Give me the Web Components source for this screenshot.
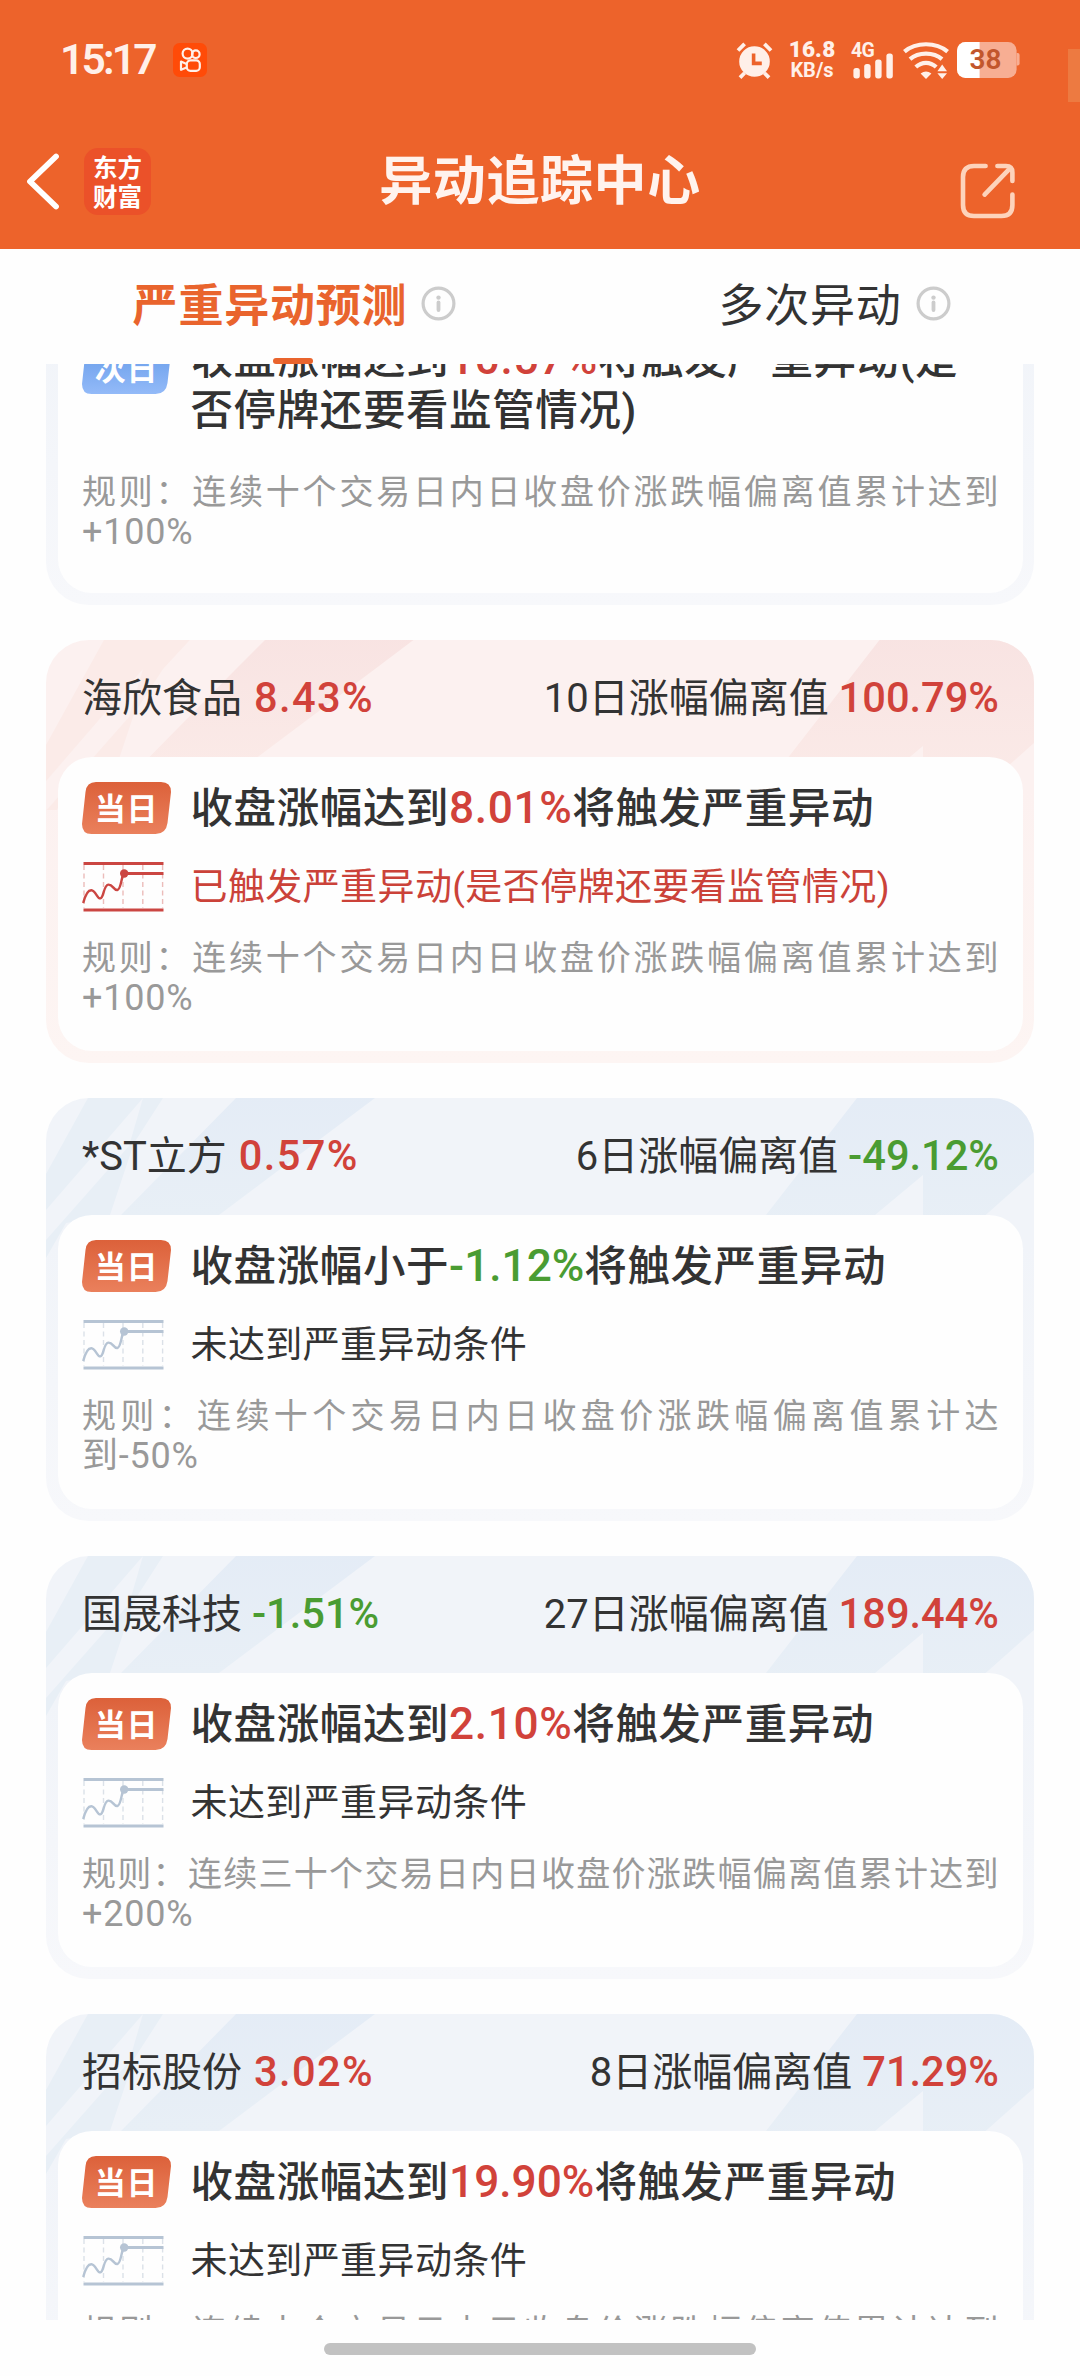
<!DOCTYPE html>
<html lang="zh-CN">
<head>
<meta charset="utf-8">
<title>异动追踪中心</title>
<style>
  body {
    margin: 0;
    width: 1080px;
    height: 2376px;
    overflow: hidden;
    background: #fefefe;
    color: #333;
    font-family: Roboto, "Noto Sans CJK SC", sans-serif;
  }
</style>
</head>
<body>
<app-page>
  <status-bar slot="top" time="15:17" battery="38"></status-bar>
  <nav-header slot="top">异动追踪中心</nav-header>
  <tab-bar slot="top">
    <tab-item active>严重异动预测</tab-item>
    <tab-item>多次异动</tab-item>
  </tab-bar>

  <stock-card long>
    <day-badge slot="badge" next>次日</day-badge>
    <span slot="title">收盘涨幅达到<rate-num>10.57%</rate-num>将触发严重异动(是<br>否停牌还要看监管情况)</span>
    <span slot="rule">规则：连续十个交易日内日收盘价涨跌幅偏离值累计达到</span>
    <span slot="rule-end">+100%</span>
  </stock-card>

  <stock-card hit>
    <span slot="name">海欣食品 <rate-num wide>8.43%</rate-num></span>
    <span slot="total">10日涨幅偏离值 <rate-num>100.79%</rate-num></span>
    <day-badge slot="badge">当日</day-badge>
    <span slot="title">收盘涨幅达到<rate-num>8.01%</rate-num>将触发严重异动</span>
    <span slot="state">已触发严重异动(是否停牌还要看监管情况)</span>
    <span slot="rule">规则：连续十个交易日内日收盘价涨跌幅偏离值累计达到</span>
    <span slot="rule-end">+100%</span>
  </stock-card>

  <stock-card>
    <span slot="name">*ST立方 <rate-num wide>0.57%</rate-num></span>
    <span slot="total">6日涨幅偏离值 <rate-num down>-49.12%</rate-num></span>
    <day-badge slot="badge">当日</day-badge>
    <span slot="title">收盘涨幅小于<rate-num down tight>-1.12%</rate-num>将触发严重异动</span>
    <span slot="state">未达到严重异动条件</span>
    <span slot="rule">规则：连续十个交易日内日收盘价涨跌幅偏离值累计达</span>
    <span slot="rule-end">到-50%</span>
  </stock-card>

  <stock-card>
    <span slot="name">国晟科技 <rate-num down>-1.51%</rate-num></span>
    <span slot="total">27日涨幅偏离值 <rate-num>189.44%</rate-num></span>
    <day-badge slot="badge">当日</day-badge>
    <span slot="title">收盘涨幅达到<rate-num>2.10%</rate-num>将触发严重异动</span>
    <span slot="state">未达到严重异动条件</span>
    <span slot="rule">规则：连续三十个交易日内日收盘价涨跌幅偏离值累计达到</span>
    <span slot="rule-end">+200%</span>
  </stock-card>

  <stock-card>
    <span slot="name">招标股份 <rate-num wide>3.02%</rate-num></span>
    <span slot="total">8日涨幅偏离值 <rate-num>71.29%</rate-num></span>
    <day-badge slot="badge">当日</day-badge>
    <span slot="title">收盘涨幅达到<rate-num tight>19.90%</rate-num>将触发严重异动</span>
    <span slot="state">未达到严重异动条件</span>
    <span slot="rule">规则：连续十个交易日内日收盘价涨跌幅偏离值累计达到</span>
    <span slot="rule-end">+100%</span>
  </stock-card>
</app-page>

<script>
// small helper: every element renders its shadow root from a string
class BaseElement extends HTMLElement {
  constructor() {
    super();
    this.attachShadow({ mode: 'open' });
  }
  connectedCallback() {
    this.shadowRoot.innerHTML = this.render();
  }
}

class AppPage extends BaseElement {
  render() {
    return `
      <style>
        :host { display: flex; flex-direction: column; height: 2376px; position: relative; }
        main { height: 1956px; overflow: hidden; flex: none; }
        .list { display: flex; flex-direction: column; gap: 35px; padding: 0 46px; margin-top: -189px; }
        footer { flex: 1; display: flex; justify-content: center; align-items: center; padding-top: 2px; }
        .home { width: 432px; height: 12px; border-radius: 6px; background: #c2c2c2; }
        .handle { position: absolute; right: 0; top: 49px; width: 12px; height: 53px; background: #ed7a41; }
      </style>
      <slot name="top"></slot>
      <main><div class="list"><slot></slot></div></main>
      <footer><div class="home"></div></footer>
      <div class="handle"></div>
    `;
  }
}

class StatusBar extends BaseElement {
  render() {
    return `
      <style>
        :host {
          display: flex; align-items: center; justify-content: space-between;
          box-sizing: border-box; height: 120px; padding: 0 60px 0 60px;
          background: #ed632b; color: #fff0e9;
        }
        div { display: flex; align-items: center; }
        .time { font-size: 42.5px; font-weight: 600; letter-spacing: -2.8px; line-height: 50px; width: 112.5px; }
        .speed { flex-direction: column; align-items: center; width: 46px; margin: 0 16px 2px 16px; font-weight: 700; }
        .speed b { font-size: 22.5px; line-height: 21px; letter-spacing: .2px; }
        .speed span { font-size: 20px; line-height: 20px; }
        .net { display: grid; width: 44px; height: 38px; }
        .net > * { grid-area: 1 / 1; }
        .net b { font-size: 19.5px; line-height: 19px; align-self: start; letter-spacing: -.6px; }
        .cell { display: grid; place-items: center start; }
        .cell > * { grid-area: 1 / 1; }
        .cell b { font-size: 28px; line-height: 34px; font-weight: 600; color: #c2562c; padding-left: 12.5px; }
        svg { display: block; flex: none; }
      </style>
      <div>
        <span class="time">${this.getAttribute('time')}</span>
        <svg width="34" height="34" viewBox="0 0 34 34">
          <rect width="34" height="34" rx="6.5" fill="#ff4b08"/>
          <g fill="none" stroke="#fff0e9" stroke-width="2.2">
            <circle cx="14.6" cy="10.6" r="5"/><circle cx="22.8" cy="11.2" r="3.8"/>
            <rect x="13.8" y="17.4" width="13" height="10.4" rx="3.6"/>
            <path d="M13.6 21 8 18.6v8.2l5.6-2.4" stroke-linejoin="round"/>
          </g>
        </svg>
      </div>
      <div>
        <svg width="37" height="38" viewBox="0 0 37 38">
          <circle cx="18.5" cy="20.5" r="15.3" fill="#fff0e9"/>
          <path d="M2 9.5 8.6 2.8M28.4 2.8 35 9.5M4 36.6 8.6 32M33 36.6 28.4 32" stroke="#fff0e9" stroke-width="3.8"/>
          <path d="M17.6 12.6v9.8h8.2" fill="none" stroke="#ed632b" stroke-width="3.6"/>
        </svg>
        <div class="speed"><b>16.8</b><span>KB/s</span></div>
        <div class="net">
          <b>4G</b>
          <svg width="44" height="38" viewBox="0 0 44 38" fill="#fff0e9">
            <rect x="2.4" y="27" width="6.4" height="10.4" rx="2.6"/>
            <rect x="13.2" y="23" width="6.4" height="14.4" rx="2.6"/>
            <rect x="24.2" y="18.4" width="6.4" height="19" rx="2.6"/>
            <rect x="35.4" y="12.4" width="6.4" height="25" rx="2.6"/>
          </svg>
        </div>
        <svg width="46" height="38" viewBox="0 0 46 38" style="margin:0 8px 0 8px">
          <g fill="none" stroke="#fff0e9" stroke-width="4.2">
            <path d="M1.4 10.6C13 .8 33 .8 44.6 10.6"/>
            <path d="M7 18.2C15.4 10.8 30.6 10.8 39 18.2"/>
            <path d="M12.8 26C19 20.4 27 20.4 33.2 26"/>
          </g>
          <path d="M17.6 32.4q5.4-3.6 10.8 0L23 38z" fill="#fff0e9"/>
          <path d="M34.4 30.2h9.6L39.2 23.4zM34.4 32.2h9.6L39.2 38z" fill="#fff0e9"/>
        </svg>
        <div class="cell">
          <svg width="63" height="38" viewBox="0 0 63 38">
            <defs><clipPath id="b"><rect y="1" width="59.6" height="36" rx="8.5"/></clipPath></defs>
            <g clip-path="url(#b)">
              <rect width="60" height="38" fill="#f7ae93"/><rect width="22.6" height="38" fill="#fff"/>
            </g>
            <path d="M59.6 12h1q2 0 2 2v8.6q0 2-2 2h-1z" fill="#f7ae93"/>
          </svg>
          <b>${this.getAttribute('battery')}</b>
        </div>
      </div>
    `;
  }
}

class NavHeader extends BaseElement {
  render() {
    return `
      <style>
        :host {
          display: grid; grid-template-columns: 1fr auto 1fr; align-items: center;
          box-sizing: border-box; height: 129px; padding: 0 65px 7px 26px;
          background: #ed632b; color: #fff3ee;
        }
        .left { display: flex; align-items: center; gap: 25px; }
        .logo {
          width: 67px; height: 67px; border-radius: 14px; background: #eb5129; color: #fff;
          display: flex; align-items: center; justify-content: center; text-align: center;
          font: 700 24.5px/29px "Noto Sans CJK SC", sans-serif;
        }
        h1 { margin: 0 0 8px 39px; font: 700 53px/70px "Noto Sans CJK SC", sans-serif; letter-spacing: .6px; }
        .right { display: flex; justify-content: flex-end; padding-top: 20px; }
        svg { display: block; }
      </style>
      <div class="left">
        <svg width="33" height="57" viewBox="0 0 33 57">
          <path d="M30 3.5 4 28.5l26 25" fill="none" stroke="#fff" stroke-width="5.8" stroke-linecap="round" stroke-linejoin="round"/>
        </svg>
        <div class="logo">东方<br>财富</div>
      </div>
      <h1><slot></slot></h1>
      <div class="right">
        <svg width="55" height="56" viewBox="0 0 55 56" fill="none" stroke="#fdd3bb" stroke-width="4.6" stroke-linecap="round">
          <path d="M25.6 3H14Q3 3 3 14v28q0 11 11 11h27.4q11 0 11-11V31.6"/>
          <path d="M37.4 3h8.6q6.4 0 6.4 6.4v8.6M50 5.4 24.6 31.6"/>
        </svg>
      </div>
    `;
  }
}

class TabBar extends BaseElement {
  render() {
    return `
      <style>
        :host { display: flex; height: 115px; flex: none; background: #fefefe; }
      </style>
      <slot></slot>
    `;
  }
}

class TabItem extends BaseElement {
  render() {
    return `
      <style>
        :host {
          flex: 1; display: flex; justify-content: center; align-items: center; position: relative;
          font: 400 45px/60px "Noto Sans CJK SC", sans-serif; letter-spacing: .8px;
        }
        :host([active]) { color: #e9642d; font-weight: 700; }
        span { display: flex; align-items: center; margin: 0 -49px 8px 0; }
        svg { margin: 2px 0 0 14px; }
        i { display: none; position: absolute; left: 273px; bottom: 0; width: 40px; height: 6px; border-radius: 3px; background: #e9642d; }
        :host([active]) i { display: block; }
      </style>
      <span><slot></slot>
        <svg width="35" height="35" viewBox="0 0 35 35">
          <circle cx="17.5" cy="17.5" r="15.4" fill="none" stroke="#ccc" stroke-width="3.2"/>
          <circle cx="17.5" cy="11.6" r="2.2" fill="#ccc"/>
          <path d="M17.5 16.4v7.6" stroke="#ccc" stroke-width="3.8" stroke-linecap="round"/>
        </svg>
      </span>
      <i></i>
    `;
  }
}

class RateNum extends BaseElement {
  render() {
    return `<style>
        :host { color: #d1423a; font-family: Roboto, sans-serif; font-size: 1.04em; font-weight: 500; line-height: 1; }
        :host([down]) { color: #4a9c32; }
        :host([tight]) { letter-spacing: 0; }
        :host([wide]) { letter-spacing: 1.4px; margin-left: 2px; }
      </style><slot></slot>`;
  }
}

class DayBadge extends BaseElement {
  render() {
    const next = this.hasAttribute('next');
    return `
      <style>
        :host {
          display: grid; place-items: center; width: 89px; height: 52px; flex: none;
          color: #fff; font: 700 31px/52px "Noto Sans CJK SC", sans-serif; letter-spacing: .8px;
        }
        svg, span { grid-area: 1 / 1; }
        span { margin-top: -2px; }
      </style>
      <svg width="89" height="52" viewBox="0 0 89 52">
        <defs><linearGradient id="g" x2="0" y2="1">
          <stop stop-color="${next ? '#6299e8' : '#dc613a'}"/><stop offset="1" stop-color="${next ? '#93baf8' : '#ea805c'}"/>
        </linearGradient></defs>
        <path d="M14 0h65q10 0 10 10l-3.5 31q-1.5 11-12 11H9.5Q0 52 0 42L3.5 10Q4.5 0 14 0z" fill="url(#g)"/>
      </svg>
      <span><slot></slot></span>
    `;
  }
}

class TrendIcon extends BaseElement {
  render() {
    const hit = this.hasAttribute('hit');
    const line = hit ? '#cb4642' : '#b6c4d4';
    const dash = hit ? '#ecbcba' : '#dbe1e8';
    return `
      <style>:host { display: block; } svg { display: block; }</style>
      <svg width="84" height="52" viewBox="0 0 84 52" fill="none" stroke="${line}" stroke-width="2.4">
        <path d="M2 5v43M21.5 5v43M41 5v43M60.8 5v43M80.6 5v43" stroke="${dash}" stroke-width="1.4" stroke-dasharray="5 3.5"/>
        <path d="M1.5 3.5h80M1.5 50h80M42 13.5h39.5" stroke-width="2.8"/>
        <path d="M1.2 43C3 36 6 30 9.4 30.2c4.4.3 5.6 8.6 9 8.2 3.4-.5 3.2-13.6 8-13.8 4.6-.2 5.4 6 9 5.4 3.4-.6 3.6-10 6-16.5"/>
        <circle cx="42.2" cy="13.5" r="4.2" fill="${line}" stroke="none"/>
      </svg>
    `;
  }
}

class StockCard extends BaseElement {
  render() {
    const hit = this.hasAttribute('hit');
    const base = hit ? '#fcf1f0' : '#f1f4f9';
    const band = hit ? '#f8e3e2' : '#e3ebf6';
    const soft = hit ? '#fbebe8' : '#e8eff6';
    return `
      <style>
        :host {
          display: flex; flex-direction: column; flex: none; position: relative; isolation: isolate;
          box-sizing: border-box; height: 423px; padding: 0 11.5px 12px;
          border-radius: 43px; overflow: hidden;
          background: linear-gradient(${base} 35%, ${hit ? '#fdf5f3' : '#f7f8fb'});
        }
        :host([long]) { height: 430px; }
        .art { position: absolute; left: 0; top: 0; z-index: -1; }
        header {
          height: 117px; padding: 0 23.5px 0 24.5px; display: flex; justify-content: space-between; align-items: center;
          font-size: 40px; line-height: 60px; white-space: nowrap;
        }
        .body {
          flex: 1; border-radius: 34px; background: #fefefe; padding: 25px 24px 0 24.5px;
          display: flex; flex-direction: column; white-space: nowrap;
        }
        .row { display: grid; grid-template-columns: 108.5px 1fr; height: 52px; align-items: center; }
        .title { font-size: 42.5px; font-weight: 500; letter-spacing: .6px; line-height: 51px; }
        .state { margin-top: 25px; font-size: 37px; letter-spacing: .4px; line-height: 50px; color: ${hit ? '#cb4239' : '#333'}; }
        .state slot { display: block; padding-top: 4px; }
        .rule { margin-top: 27px; font-size: 34px; line-height: 40px; color: #999; }
        .rule div:first-child { text-align: justify; text-align-last: justify; }
        .rule div:last-child { font-size: 36px; letter-spacing: .8px; }
        :host([long]) .body { padding-top: 42px; }
        :host([long]) .title { height: 102px; align-items: start; }
        :host([long]) ::slotted(day-badge) { margin-top: 8px; }
        :host([long]) .state { display: none; }
        :host([long]) .rule { margin-top: 36px; }
      </style>
      <svg class="art" width="988" height="170" viewBox="0 ${hit ? -29 : 0} 988 170">
        <defs><linearGradient id="f" x2="0" y2="1">
          <stop stop-color="${band}"/><stop offset="1" stop-color="${soft}"/>
        </linearGradient></defs>
        <g fill="url(#f)">
          <path d="M64-40H154L117 0 88 45 64 117 20 125 0 160V76z" fill="${soft}"/>
          <path d="M97 0 0 112v30L83 48z" fill="${base}"/>
          <path d="M230-40H382L329 0 173 117H75L190 0z"/>
          <path d="M842-40H988V74L925 130H877V77L829 117H720L811 0z"/>
        </g>
      </svg>
      <header><slot name="name"></slot><slot name="total"></slot></header>
      <div class="body">
        <div class="row title"><slot name="badge"></slot><slot name="title"></slot></div>
        <div class="row state"><trend-icon ${hit ? 'hit' : ''}></trend-icon><slot name="state"></slot></div>
        <div class="rule"><div><slot name="rule"></slot></div><div><slot name="rule-end"></slot></div></div>
      </div>
    `;
  }
}

customElements.define('app-page', AppPage);
customElements.define('status-bar', StatusBar);
customElements.define('nav-header', NavHeader);
customElements.define('tab-bar', TabBar);
customElements.define('tab-item', TabItem);
customElements.define('rate-num', RateNum);
customElements.define('day-badge', DayBadge);
customElements.define('trend-icon', TrendIcon);
customElements.define('stock-card', StockCard);
</script>
</body>
</html>
